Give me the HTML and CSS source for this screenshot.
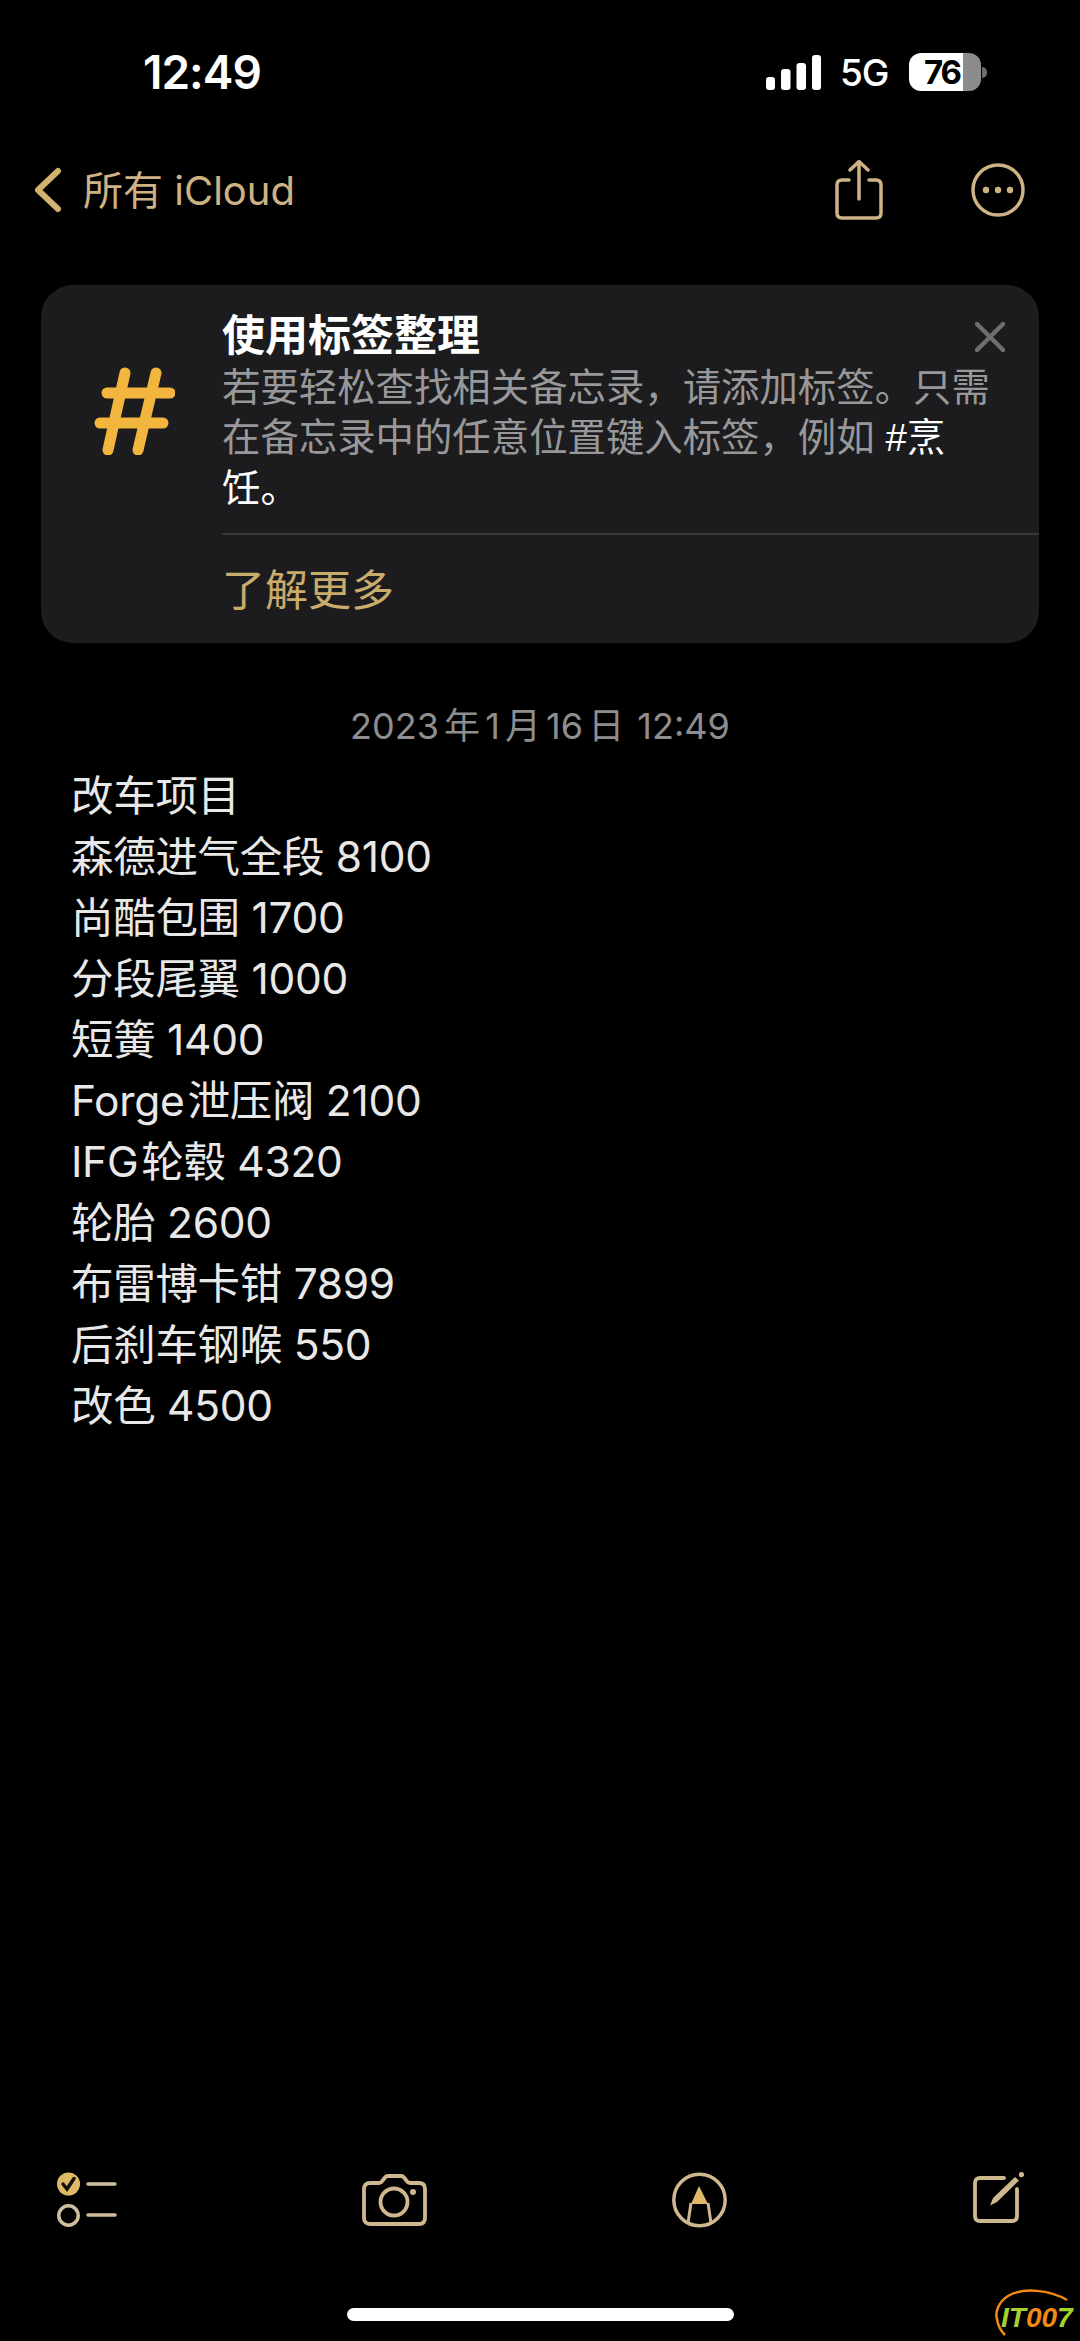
FILE: index.html
```html
<!DOCTYPE html>
<html lang="zh-CN">
<head>
    <meta charset="UTF-8">
    <meta name="viewport" content="width=device-width, initial-scale=1.0">
    <title>备忘录</title>
    <link rel="stylesheet" href="styles.css">
</head>
<body>
    <div class="page">
        <div class="status-bar">
            <span class="time">12:49</span>
            <div class="status-right">
                <svg class="signal" width="55" height="35" viewBox="0 0 55 35">
                    <rect x="0" y="22" width="9" height="13" rx="3"/>
                    <rect x="15" y="14" width="9.5" height="21" rx="3"/>
                    <rect x="30.5" y="8" width="9.5" height="27" rx="3"/>
                    <rect x="46" y="0" width="9" height="35" rx="3"/>
                </svg>
                <span class="network">5G</span>
                <div class="battery">
                    <div class="battery-body"><span class="battery-level">76</span></div>
                    <div class="battery-nub"></div>
                </div>
            </div>
        </div>

        <div class="nav-bar">
            <div class="nav-back">
                <svg width="29" height="46" viewBox="0 0 29 46" fill="none" stroke="#d2b26e" stroke-width="6" stroke-linecap="round" stroke-linejoin="round">
                    <path d="M25 4 L5 23 L25 42"/>
                </svg>
                <span class="nav-back-text">所有 iCloud</span>
            </div>
            <div class="nav-actions">
                <svg width="48" height="60" viewBox="0 0 48 60" fill="none" stroke="#cdb285" stroke-width="3.5" stroke-linecap="round" stroke-linejoin="round">
                    <path d="M14 20 H7 Q2 20 2 25 V53 Q2 58 7 58 H41 Q46 58 46 53 V25 Q46 20 41 20 H34"/>
                    <path d="M24 39 V2 M15 10 L24 1.5 L33 10"/>
                </svg>
                <svg width="54" height="54" viewBox="0 0 54 54" fill="none" stroke="#cdb285" stroke-width="3.5">
                    <circle cx="27" cy="27" r="25"/>
                    <circle cx="15" cy="27" r="3.2" fill="#cdb285" stroke="none"/>
                    <circle cx="27" cy="27" r="3.2" fill="#cdb285" stroke="none"/>
                    <circle cx="39" cy="27" r="3.2" fill="#cdb285" stroke="none"/>
                </svg>
            </div>
        </div>

        <div class="tip-card">
            <div class="tip-icon">
                <svg width="83" height="90" viewBox="0 0 83 90" fill="none" stroke-linecap="round" stroke-width="11">
                    <path d="M33 8 L16 85 M64 8 L46 85" stroke="#f2b63f"/>
                    <path d="M15 28 H78 M8 58 H71" stroke="#f2b63f"/>
                </svg>
            </div>
            <div class="tip-content">
                <div class="tip-title">使用标签整理</div>
                <p class="tip-text">若要轻松查找相关备忘录，请添加标签。只需在备忘录中的任意位置键入标签，例如 <span class="tag"><span class="tag-hash">#</span>烹饪。</span></p>
                <div class="tip-link">了解更多</div>
            </div>
            <svg class="tip-close" width="30" height="30" viewBox="0 0 30 30" fill="none" stroke="#6e6e70" stroke-width="4.5" stroke-linecap="round">
                <path d="M2 2 L28 28 M28 2 L2 28"/>
            </svg>
        </div>

        <div class="note-date">2023 年 1 月 16 日 <span class="date-time">12:49</span></div>

        <div class="note-body">
            <div>改车项目</div>
            <div>森德进气全段 8100</div>
            <div>尚酷包围 1700</div>
            <div>分段尾翼 1000</div>
            <div>短簧 1400</div>
            <div><span class="latin">Forge</span>泄压阀 2100</div>
            <div><span class="latin">IFG</span>轮毂 4320</div>
            <div>轮胎 2600</div>
            <div>布雷博卡钳 7899</div>
            <div>后刹车钢喉 550</div>
            <div>改色 4500</div>
        </div>

        <div class="toolbar">
            <svg width="60" height="56" viewBox="0 0 60 56" fill="none" stroke="#cfbf9f" stroke-width="3.5" stroke-linecap="round">
                <circle cx="11.5" cy="12" r="11.5" fill="#dfb968" stroke="none"/>
                <path d="M6 12 L10 17 L17 6.5" stroke="#111" stroke-width="3.5"/>
                <path d="M31 12 H58"/>
                <circle cx="11.5" cy="43.5" r="9.7"/>
                <path d="M31 43 H58"/>
            </svg>
            <svg width="65" height="52" viewBox="0 0 65 52" fill="none" stroke="#cfb88f" stroke-width="3.8" stroke-linejoin="round">
                <path d="M8 9 H17 Q19 9 21 6 L23 3.5 Q24 2 26 2 H39 Q41 2 42 3.5 L44 6 Q46 9 48 9 H57 Q63 9 63 15 V44 Q63 50 57 50 H8 Q2 50 2 44 V15 Q2 9 8 9 Z"/>
                <circle cx="32" cy="28" r="13.5"/>
                <circle cx="51" cy="18" r="3" fill="#cfb88f" stroke="none"/>
            </svg>
            <svg width="55" height="56" viewBox="0 0 55 56" fill="none" stroke="#cfb88f" stroke-width="3.5">
                <circle cx="27.5" cy="28" r="25.7"/>
                <path d="M27 14 L36 32 H19 Z" fill="#dfb968" stroke="none"/>
                <path d="M19 31 L16 51 M36 31 L39 51" stroke-width="3"/>
            </svg>
            <svg width="52" height="56" viewBox="0 0 52 56" fill="none" stroke="#cfb88f" stroke-width="3.8" stroke-linecap="round">
                <path d="M32 6 H8 Q3 6 3 11 V44 Q3 49 8 49 H40 Q45 49 45 44 V17"/>
                <path d="M18 33.5 L21 26 L43 5 L47 8.5 L25 30 Z" fill="#cfb88f" stroke="none"/>
                <circle cx="49.5" cy="2.7" r="2.6" fill="#cfb88f" stroke="none"/>
            </svg>
        </div>
        <div class="home-bar"></div>

        <div class="watermark">
            <svg width="85" height="50" viewBox="0 0 85 50" fill="none" stroke="#f08a12" stroke-width="2.5">
                <path d="M72 13 C55 3 28 0 13 9 C3 15 0 26 2 32 C3 40 6 44 10 48"/>
            </svg>
            <span class="watermark-text">IT<span class="watermark-mid">00</span>7</span>
        </div>
    </div>
</body>
</html>
```
FILE: styles.css
```css
body {
    margin: 0;
    background-color: #000;
    font-family: Inter, "Noto Sans CJK SC", sans-serif;
}
.page {
    position: relative;
    width: 1080px;
    height: 2341px;
    display: flex;
    flex-direction: column;
    overflow: hidden;
    background-color: #000;
    color: #e8e8e8;
}
.status-bar {
    height: 144px;
    display: flex;
    justify-content: space-between;
    align-items: center;
    padding: 0 93px 0 143px;
}
.time {
    color: #fff;
    font-size: 46px;
    font-weight: 600;
    letter-spacing: -1px;
}
.status-right {
    display: flex;
    align-items: center;
}
.signal {
    fill: #fff;
}
.network {
    width: 47px;
    margin-left: 19px;
    color: #fff;
    font-size: 37px;
    font-weight: 500;
    letter-spacing: -1px;
}
.battery {
    display: flex;
    align-items: center;
    margin-left: 22px;
}
.battery-body {
    width: 72px;
    height: 38px;
    border-radius: 12px;
    background: linear-gradient(to right, #fff 75%, #8c8c8c 75%);
    color: #000;
    text-align: center;
    line-height: 38px;
    font-size: 33px;
    font-weight: 700;
}
.battery-level {
    display: block;
    width: 54px;
    margin-left: 6px;
    letter-spacing: -2px;
}
.battery-nub {
    width: 5px;
    height: 11px;
    margin-left: 1px;
    border-radius: 0 5px 5px 0;
    background-color: #6d6d6d;
}
.nav-bar {
    height: 92px;
    display: flex;
    justify-content: space-between;
    align-items: center;
    padding: 0 55px 0 33px;
}
.nav-back {
    display: flex;
    align-items: center;
    gap: 21px;
    color: #cdb285;
    font-size: 40px;
}
.nav-back-text {
    padding-bottom: 4px;
}
.nav-actions {
    display: flex;
    align-items: center;
    gap: 88px;
}
.tip-card {
    position: relative;
    width: 998px;
    height: 358px;
    margin: 49px 0 0 41px;
    display: flex;
    border-radius: 32px;
    background-color: #1c1c1e;
}
.tip-icon {
    flex: 0 0 181px;
    padding: 80px 0 0 51px;
    box-sizing: border-box;
}
.tip-content {
    flex: 1;
}
.tip-title {
    margin-top: 25px;
    color: #fff;
    font-size: 43px;
    font-weight: 700;
    line-height: 50px;
}
.tip-text {
    height: 150px;
    margin: 2px 0 0;
    padding-right: 48px;
    color: #98989a;
    font-size: 38.4px;
    line-height: 50px;
}
.tag {
    color: #fff;
}
.tag-hash {
    font-family: "Liberation Sans", sans-serif;
}
.tip-link {
    margin-top: 21px;
    padding-top: 30px;
    border-top: 2px solid #38383a;
    color: #c9ab6c;
    font-size: 43px;
    line-height: 50px;
}
.tip-close {
    position: absolute;
    top: 37px;
    right: 34px;
}
.note-date {
    margin-top: 60px;
    color: #8e8e8e;
    font-size: 36px;
    line-height: 46px;
    text-align: center;
    word-spacing: -5px;
}
.date-time {
    margin-left: 8px;
}
.note-body {
    margin-top: 16px;
    padding-left: 71px;
    font-size: 42.5px;
    line-height: 61px;
    letter-spacing: -0.3px;
}
.latin {
    margin-right: 3px;
}
.toolbar {
    margin-top: auto;
    display: flex;
    justify-content: space-between;
    align-items: center;
    padding: 0 56px 0 57px;
}
.home-bar {
    width: 387px;
    height: 13px;
    margin: 80px auto 20px;
    border-radius: 7px;
    background-color: #fff;
}
.watermark {
    position: absolute;
    right: 0;
    bottom: 4px;
    width: 85px;
    height: 50px;
}
.watermark-text {
    position: absolute;
    left: 6px;
    top: 15px;
    color: #a5d32e;
    font-family: "Liberation Sans", sans-serif;
    font-size: 28px;
    font-style: italic;
    font-weight: 700;
}
.watermark-mid {
    color: #f08a12;
}
```
